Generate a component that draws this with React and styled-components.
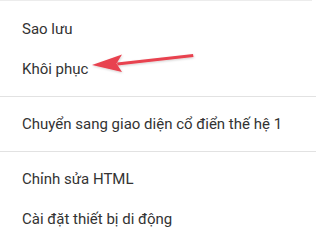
import React from "react";
import styled, { createGlobalStyle } from "styled-components";

const Global = createGlobalStyle`
  html, body { margin: 0; padding: 0; background: #fff; }
  body { font-family: Roboto, "Noto Sans", Arial, sans-serif; }
`;

const Menu = styled.div`
  position: relative;
  width: 316px;
  height: 244px;
  background: #fff;
  overflow: hidden;
`;

const TopEdge = styled.div`
  width: 312px;
  height: 1px;
  background: #ececec;
`;

const Section = styled.div`
  display: flex;
  flex-direction: column;
  padding: ${(p) => (p.$first ? "8px 0 7px" : "7px 0")};
  border-top: ${(p) => (p.$first ? "none" : "1px solid #e2e2e2")};
`;

const Item = styled.div`
  height: 40px;
  line-height: 40px;
  padding-left: 22px;
  font-size: 15px;
  color: #333;
  white-space: nowrap;
`;

const Arrow = styled.svg`
  position: absolute;
  left: 88px;
  top: 48px;
  width: 110px;
  height: 30px;
  overflow: visible;
`;

export default function App() {
  return (
    <>
      <Global />
      <Menu>
        <TopEdge />
        <Section $first>
          <Item>Sao lưu</Item>
          <Item>Khôi phục</Item>
        </Section>
        <Section>
          <Item>Chuyển sang giao diện cổ điển thế hệ 1</Item>
        </Section>
        <Section>
          <Item>Chỉnh sửa HTML</Item>
          <Item>Cài đặt thiết bị di động</Item>
        </Section>
        <Arrow viewBox="88 48 110 30">
          <defs>
            <filter id="sh" x="-10%" y="-50%" width="120%" height="200%">
              <feDropShadow dx="0.5" dy="1" stdDeviation="0.8" floodColor="#000" floodOpacity="0.18" />
            </filter>
          </defs>
          <g filter="url(#sh)">
            <path d="M117 62.5 L193 54 L193.5 57 L117.5 65.5 Z" fill="#e8434f" />
            <path d="M92 65 L122 54.5 L116.5 63.5 L122 72 Z" fill="#e8434f" />
          </g>
        </Arrow>
      </Menu>
    </>
  );
}
